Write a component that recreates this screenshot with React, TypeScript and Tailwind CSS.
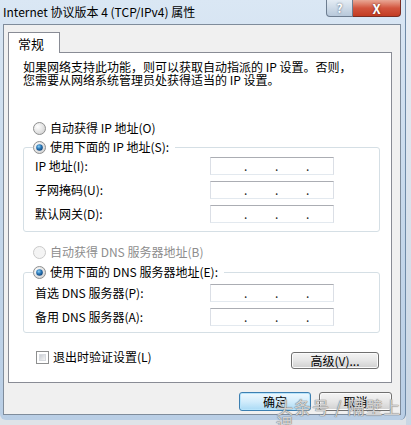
import React from 'react';

const FONT = '"Noto Sans CJK SC", "Noto Sans", sans-serif';

const Radio = ({ checked = false, disabled = false }: { checked?: boolean; disabled?: boolean }) => (
  <svg width="13" height="13" viewBox="0 0 13 13" className="shrink-0">
    <defs>
      <radialGradient id="rfill" cx="0.35" cy="0.35" r="0.7">
        <stop offset="0" stopColor="#ffffff" />
        <stop offset="1" stopColor="#d4d4d4" />
      </radialGradient>
      <radialGradient id="rdot" cx="0.4" cy="0.35" r="0.7">
        <stop offset="0" stopColor="#8fd0f5" />
        <stop offset="0.5" stopColor="#2a78b8" />
        <stop offset="1" stopColor="#0e3f74" />
      </radialGradient>
    </defs>
    <circle cx="6.5" cy="6.5" r="6" fill={disabled ? '#f4f4f4' : 'url(#rfill)'} stroke={disabled ? '#c9c9c9' : '#8e8f8f'} />
    {checked && <circle cx="6.5" cy="6.5" r="3.3" fill="url(#rdot)" />}
  </svg>
);

const IpBox = () => (
  <div className="w-[124px] h-[18px] bg-white border border-[#dbdfe6] border-t-[#abadb3] border-b-[#e3e9ef] flex items-end pl-[33px] gap-[29px] pb-[2px] text-[12px] leading-none text-[#222]">
    <span className="w-[2px]">.</span>
    <span className="w-[2px]">.</span>
    <span className="w-[2px]">.</span>
  </div>
);

const Field = ({ label }: { label: string }) => (
  <div className="flex items-center justify-between h-[18px]">
    <span>{label}</span>
    <IpBox />
  </div>
);

const Button = ({ children, primary = false, className = '' }: { children: React.ReactNode; primary?: boolean; className?: string }) => (
  <button
    className={`${className} rounded-[3px] border text-[12px] leading-none text-black flex items-center justify-center ${
      primary
        ? 'border-[#3c7fb1] bg-gradient-to-b from-[#eef8fe] via-[#d2ecfb] to-[#a9daf5] shadow-[inset_0_0_0_1px_#b8e4fb]'
        : 'border-[#707070] bg-gradient-to-b from-[#f4f4f4] via-[#e6e6e6] to-[#d0d0d0] shadow-[inset_0_0_0_1px_#fbfbfb]'
    }`}
  >
    {children}
  </button>
);

export default function App() {
  return (
    <div className="w-[411px] h-[425px] overflow-hidden bg-[#dfe3e8] flex relative" style={{ fontFamily: FONT }}>
      <div className="w-[406px] h-[420px] rounded-b-[6px] bg-gradient-to-b from-[#dae7f4] via-[#c6d8eb] to-[#b9cee5] border-r border-[#6f8ba8] flex flex-col">
        {/* Title bar */}
        <div className="h-[24px] flex items-start justify-between pl-[3px] pr-[4px]">
          <span className="text-[12px] leading-none mt-[6px] text-black">Internet 协议版本 4 (TCP/IPv4) 属性</span>
          <div className="flex">
            <div className="w-[27px] h-[17px] rounded-bl-[4px] border border-t-0 border-[#6d7d90] bg-gradient-to-b from-[#e4ecf4] to-[#b7c8da] flex items-center justify-center text-[12px] font-bold text-white [text-shadow:0_0_2px_#44556a]">?</div>
            <div className="w-[48px] h-[17px] rounded-br-[4px] border border-t-0 border-l-0 border-[#7a2d22] bg-gradient-to-b from-[#e8a795] via-[#d2553e] to-[#c33c22] flex items-center justify-center text-[13px] font-bold text-white leading-none [text-shadow:0_0_2px_#5a1a10]">X</div>
          </div>
        </div>

        {/* Dialog body */}
        <div className="ml-[3px] mr-[4px] h-[391px] border border-[#7f8c9b] bg-[#f0f0f0] pt-[7px] pl-[4px] pr-[8px] flex flex-col text-[12px] leading-none text-black">
          <div className="w-[52px] h-[21px] bg-white border border-b-0 border-[#898c95] pl-[9px] pt-[4px] text-[13px] -mb-px relative z-10">常规</div>
          <div className="h-[331px] bg-white border border-[#898c95] flex flex-col pl-[14px] pr-[11px]">
            <div className="mt-[7px] leading-[13px] whitespace-nowrap">
              <div>如果网络支持此功能，则可以获取自动指派的 IP 设置。否则，</div>
              <div>您需要从网络系统管理员处获得适当的 IP 设置。</div>
            </div>

            <div className="mt-[34px] h-[16px] flex items-center gap-[4px] pl-[10px]">
              <Radio />
              <span>自动获得 IP 地址(O)</span>
            </div>

            <fieldset className="mt-[3px] border border-[#d5dfe5] rounded-[3px] pt-[2px] pl-[11px] pr-[45px] pb-[8px] flex flex-col gap-[6px]">
              <legend className="-ml-[2px] pr-[6px] h-[16px] flex items-center gap-[4px] bg-white">
                <Radio checked />
                <span>使用下面的 IP 地址(S):</span>
              </legend>
              <Field label="IP 地址(I):" />
              <Field label="子网掩码(U):" />
              <Field label="默认网关(D):" />
            </fieldset>

            <div className="mt-[12px] h-[16px] flex items-center gap-[4px] pl-[10px] text-[#8d8d8d]">
              <Radio disabled />
              <span>自动获得 DNS 服务器地址(B)</span>
            </div>

            <fieldset className="mt-[4px] border border-[#d5dfe5] rounded-[3px] pt-[4px] pl-[11px] pr-[45px] pb-[6px] flex flex-col gap-[6px]">
              <legend className="-ml-[2px] pr-[6px] h-[16px] flex items-center gap-[4px] bg-white">
                <Radio checked />
                <span>使用下面的 DNS 服务器地址(E):</span>
              </legend>
              <Field label="首选 DNS 服务器(P):" />
              <Field label="备用 DNS 服务器(A):" />
            </fieldset>

            <div className="mt-[16px] flex items-start justify-between pl-[13px] pr-[1px]">
              <div className="h-[16px] flex items-center gap-[4px]">
                <div className="w-[13px] h-[13px] border border-[#8e8f8f] p-[2px] bg-white">
                  <div className="w-full h-full bg-gradient-to-br from-[#cbcfd5] to-[#f4f4f4] border border-[#d8dbe0]" />
                </div>
                <span>退出时验证设置(L)</span>
              </div>
              <Button className="mt-[3px] w-[88px] h-[17px]">高级(V)...</Button>
            </div>
          </div>

          <div className="mt-[9px] flex justify-end gap-[8px]">
            <Button primary className="w-[72px] h-[19px]">确定</Button>
            <Button className="w-[73px] h-[19px]">取消</Button>
          </div>
        </div>
      </div>
      <div className="flex-1 bg-gradient-to-b from-[#e9eef4] to-[#c9d6e4]" />

      {/* watermark */}
      <span className="absolute left-[276px] top-[398px] text-[17px] leading-none tracking-[1px] text-white/70 [text-shadow:0_0_1px_#6b6b6b,0_0_1px_#6b6b6b]">
        头条号 / 隔壁上课
      </span>
    </div>
  );
}
